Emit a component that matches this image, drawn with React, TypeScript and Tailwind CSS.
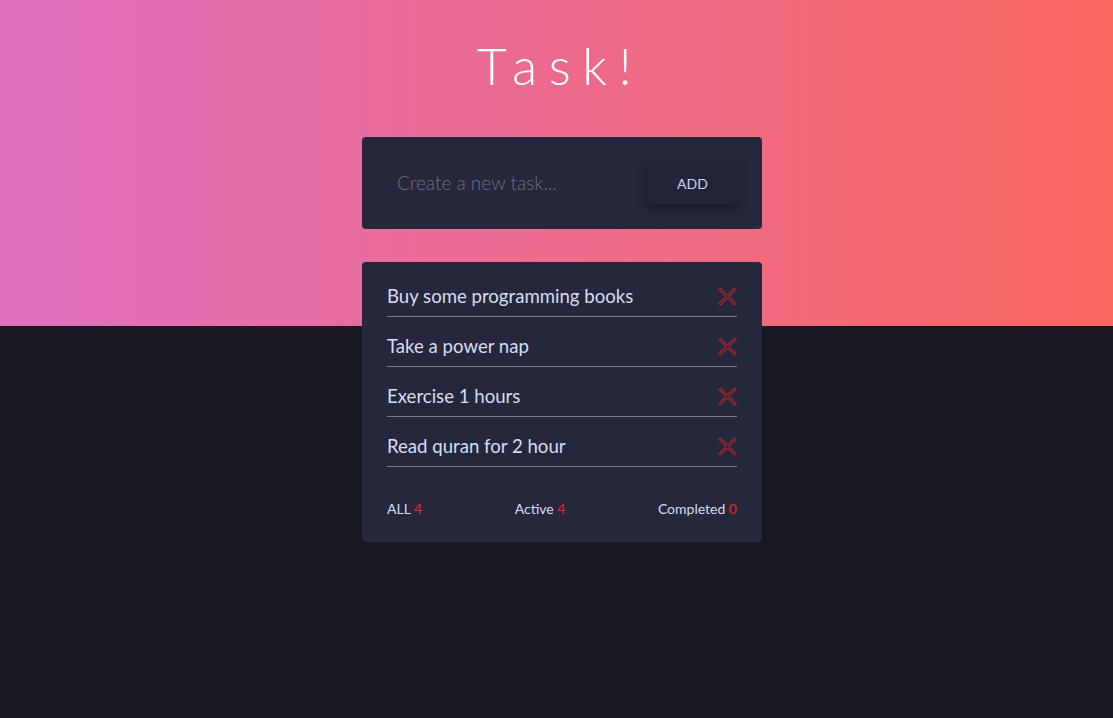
import React from "react";

const tasks = [
  "Buy some programming books",
  "Take a power nap",
  "Exercise 1 hours",
  "Read quran for 2 hour",
];

function XIcon() {
  return (
    <svg width="19" height="19" viewBox="0 0 19 19" fill="none">
      <polygon
        points="1,2.5 2.5,1 9.5,8 16.5,1 18,2.5 11,9.5 18,16.5 16.5,18 9.5,11 2.5,18 1,16.5 8,9.5"
        stroke="#ff2a1c"
        strokeWidth="1"
        fill="#252740"
      />
    </svg>
  );
}

export default function App() {
  return (
    <div
      className="relative min-h-[718px] w-full bg-[#181824]"
      style={{ fontFamily: "Lato, 'Noto Sans', sans-serif" }}
    >
      <div className="h-[326px] w-full bg-gradient-to-r from-[#df6ebf] via-[#ec6a8c] to-[#fb6860]" />
      <div className="absolute inset-x-0 top-0 flex flex-col items-center pl-[11px]">
        <h1 className="mt-[34px] h-[62px] pr-[4px] text-[52px] font-light leading-[62px] tracking-[11.5px] text-white">
          Task!
        </h1>
        <div className="mt-[41px] flex h-[92px] w-[400px] items-center justify-between rounded-[4px] bg-[#25273d] pl-[35px] pr-[25px]">
          <span className="text-[19px] font-light text-[#71727f]">
            Create a new task...
          </span>
          <button className="h-[41px] w-[89px] rounded-[4px] bg-[#23253a] text-[14px] text-[#cfd3e8] shadow-[0_4px_12px_rgba(0,0,0,0.35)]">
            ADD
          </button>
        </div>
        <div className="mt-[33px] w-[400px] rounded-[4px] bg-[#25273d] px-[25px] pb-[24px] pt-[5px]">
          {tasks.map((t) => (
            <div
              key={t}
              className="flex items-center justify-between border-b border-[#7b7c95] pb-[8px] pt-[17px]"
            >
              <span className="text-[18.6px] leading-[24px] text-[#d9ddf0]">{t}</span>
              <XIcon />
            </div>
          ))}
          <div className="mt-[33px] flex justify-between text-[14px] leading-[18px] text-[#d9ddf0]">
            <span>
              ALL <span className="text-[#f0241f]">4</span>
            </span>
            <span>
              Active <span className="text-[#f0241f]">4</span>
            </span>
            <span>
              Completed <span className="text-[#f0241f]">0</span>
            </span>
          </div>
        </div>
      </div>
    </div>
  );
}
